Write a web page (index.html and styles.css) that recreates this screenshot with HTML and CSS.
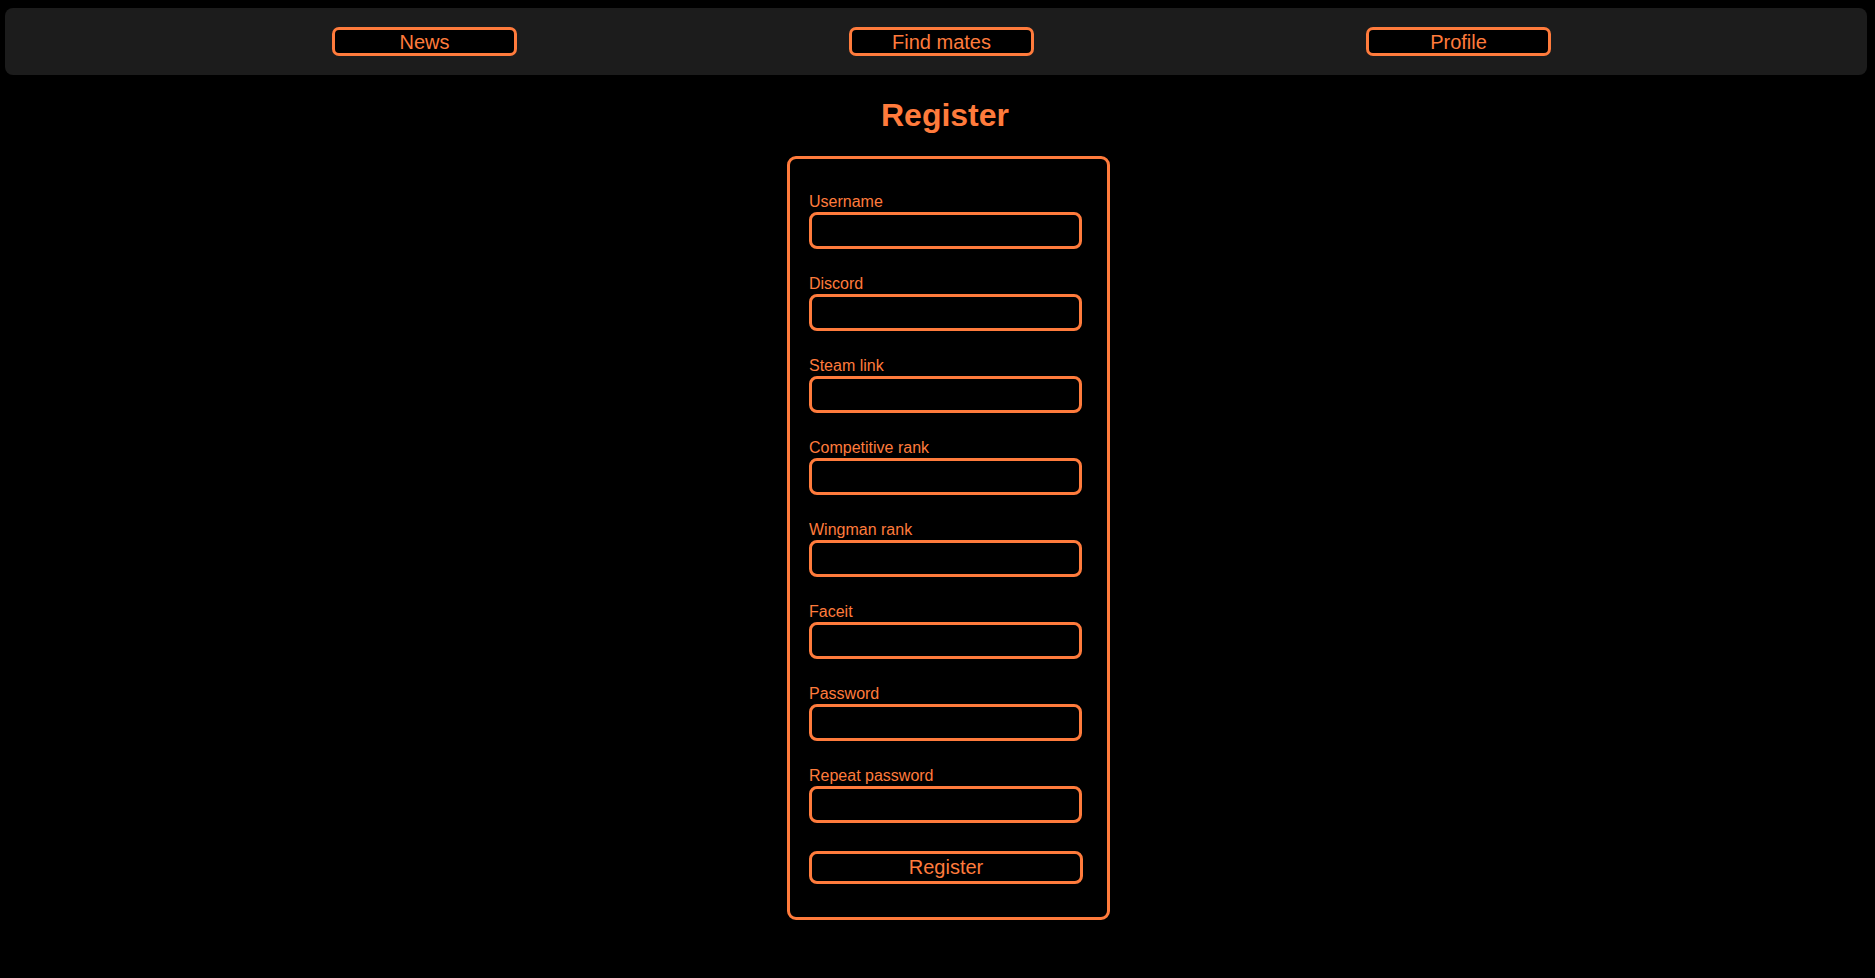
FILE: index.html
```html
<!DOCTYPE html>
<html lang="en">
<head>
<meta charset="utf-8">
<title>Register</title>
<link rel="stylesheet" href="styles.css">
</head>
<body>
<header class="topbar">
  <nav class="nav">
    <button class="nav-btn">News</button>
    <button class="nav-btn">Find mates</button>
    <button class="nav-btn">Profile</button>
  </nav>
</header>
<main class="main">
  <h1 class="title">Register</h1>
  <form class="form">
    <div class="field"><label class="label">Username</label><input class="input" type="text"></div>
    <div class="field"><label class="label">Discord</label><input class="input" type="text"></div>
    <div class="field"><label class="label">Steam link</label><input class="input" type="text"></div>
    <div class="field"><label class="label">Competitive rank</label><input class="input" type="text"></div>
    <div class="field"><label class="label">Wingman rank</label><input class="input" type="text"></div>
    <div class="field"><label class="label">Faceit</label><input class="input" type="text"></div>
    <div class="field"><label class="label">Password</label><input class="input" type="password"></div>
    <div class="field"><label class="label">Repeat password</label><input class="input" type="password"></div>
    <button class="submit" type="button">Register</button>
  </form>
</main>
</body>
</html>
```
FILE: styles.css
```css
* { box-sizing: border-box; }
html, body { background: #000; }
body {
  margin: 8px 8px 0 5px;
  font-family: "Liberation Sans", Arial, sans-serif;
  color: #ff7b3c;
}
.topbar {
  background: #1c1c1c;
  border-radius: 8px;
  height: 67px;
  display: flex;
  align-items: center;
  padding: 0 150px 0 161px;
}
.nav {
  flex: 1;
  display: flex;
  justify-content: space-around;
  align-items: center;
}
.nav-btn {
  width: 185px;
  height: 29px;
  background: #000;
  border: 3px solid #ff7b3c;
  border-radius: 7px;
  color: #ff7b3c;
  font-family: "Liberation Sans", Arial, sans-serif;
  font-size: 20px;
  line-height: 1;
  padding: 0;
}
.main {
  display: flex;
  flex-direction: column;
  align-items: center;
  padding-left: 18px;
}
.title {
  margin: 22px 0 22px;
  font-size: 32px;
  font-weight: bold;
  line-height: 37px;
}
.form {
  margin-left: 7px;
  width: 323px;
  border: 3px solid #ff7b3c;
  border-radius: 9px;
  padding: 34px 25px 33px 19px;
}
.field { margin-bottom: 26px; }
.label {
  display: block;
  font-size: 16px;
  line-height: 18px;
}
.input {
  display: block;
  margin-top: 1px;
  width: 273px;
  height: 37px;
  background: #000;
  border: 3px solid #ff7b3c;
  border-radius: 8px;
  color: #ff7b3c;
  outline: none;
}
.submit {
  display: block;
  margin-top: 28px;
  width: 274px;
  height: 33px;
  background: #000;
  border: 3px solid #ff7b3c;
  border-radius: 8px;
  color: #ff7b3c;
  font-family: "Liberation Sans", Arial, sans-serif;
  font-size: 20px;
  padding: 0;
}
```
